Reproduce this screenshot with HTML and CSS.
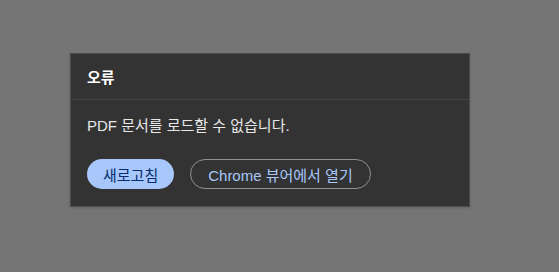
FILE: index.html
```html
<!DOCTYPE html>
<html lang="ko">
<head>
<meta charset="utf-8">
<link rel="stylesheet" href="styles.css">
</head>
<body>
<div class="dialog">
  <div class="header">오류</div>
  <div class="content">
    <p class="message">PDF 문서를 로드할 수 없습니다.</p>
    <div class="actions">
      <button class="btn btn-primary">새로고침</button>
      <button class="btn btn-outline">Chrome 뷰어에서 열기</button>
    </div>
  </div>
</div>
</body>
</html>
```
FILE: styles.css
```css
html, body {
  margin: 0;
  padding: 0;
  background: #757575;
  height: 100%;
}
body {
  font-family: "Liberation Sans", "Noto Sans CJK KR", sans-serif;
  overflow: hidden;
}
.dialog {
  box-sizing: border-box;
  width: 400px;
  margin: 53px 0 0 70px;
  background: #333333;
  border: 1px solid #4d4d4d;
  box-shadow: 0 1px 3px rgba(0,0,0,0.15);
}
.header {
  height: 46px;
  box-sizing: border-box;
  padding: 0 16px;
  display: flex;
  align-items: center;
  color: #ffffff;
  font-weight: bold;
  font-size: 15px;
  border-bottom: 1px solid #474747;
}
.content {
  padding: 16px 16px 17px;
}
.message {
  margin: 0;
  color: #e8e8e8;
  font-size: 15px;
  line-height: 20px;
}
.actions {
  display: flex;
  gap: 16px;
  margin-top: 23px;
}
.btn {
  box-sizing: border-box;
  height: 30px;
  border-radius: 15px;
  font-family: inherit;
  font-size: 15px;
  padding: 0 16px;
  white-space: nowrap;
  cursor: pointer;
}
.btn-primary {
  background: #a8c7fa;
  color: #062e6f;
  border: none;
  min-width: 87px;
}
.btn-outline {
  background: transparent;
  color: #a8c7fa;
  border: 1px solid #8e918f;
  padding: 0 17px;
}
```
